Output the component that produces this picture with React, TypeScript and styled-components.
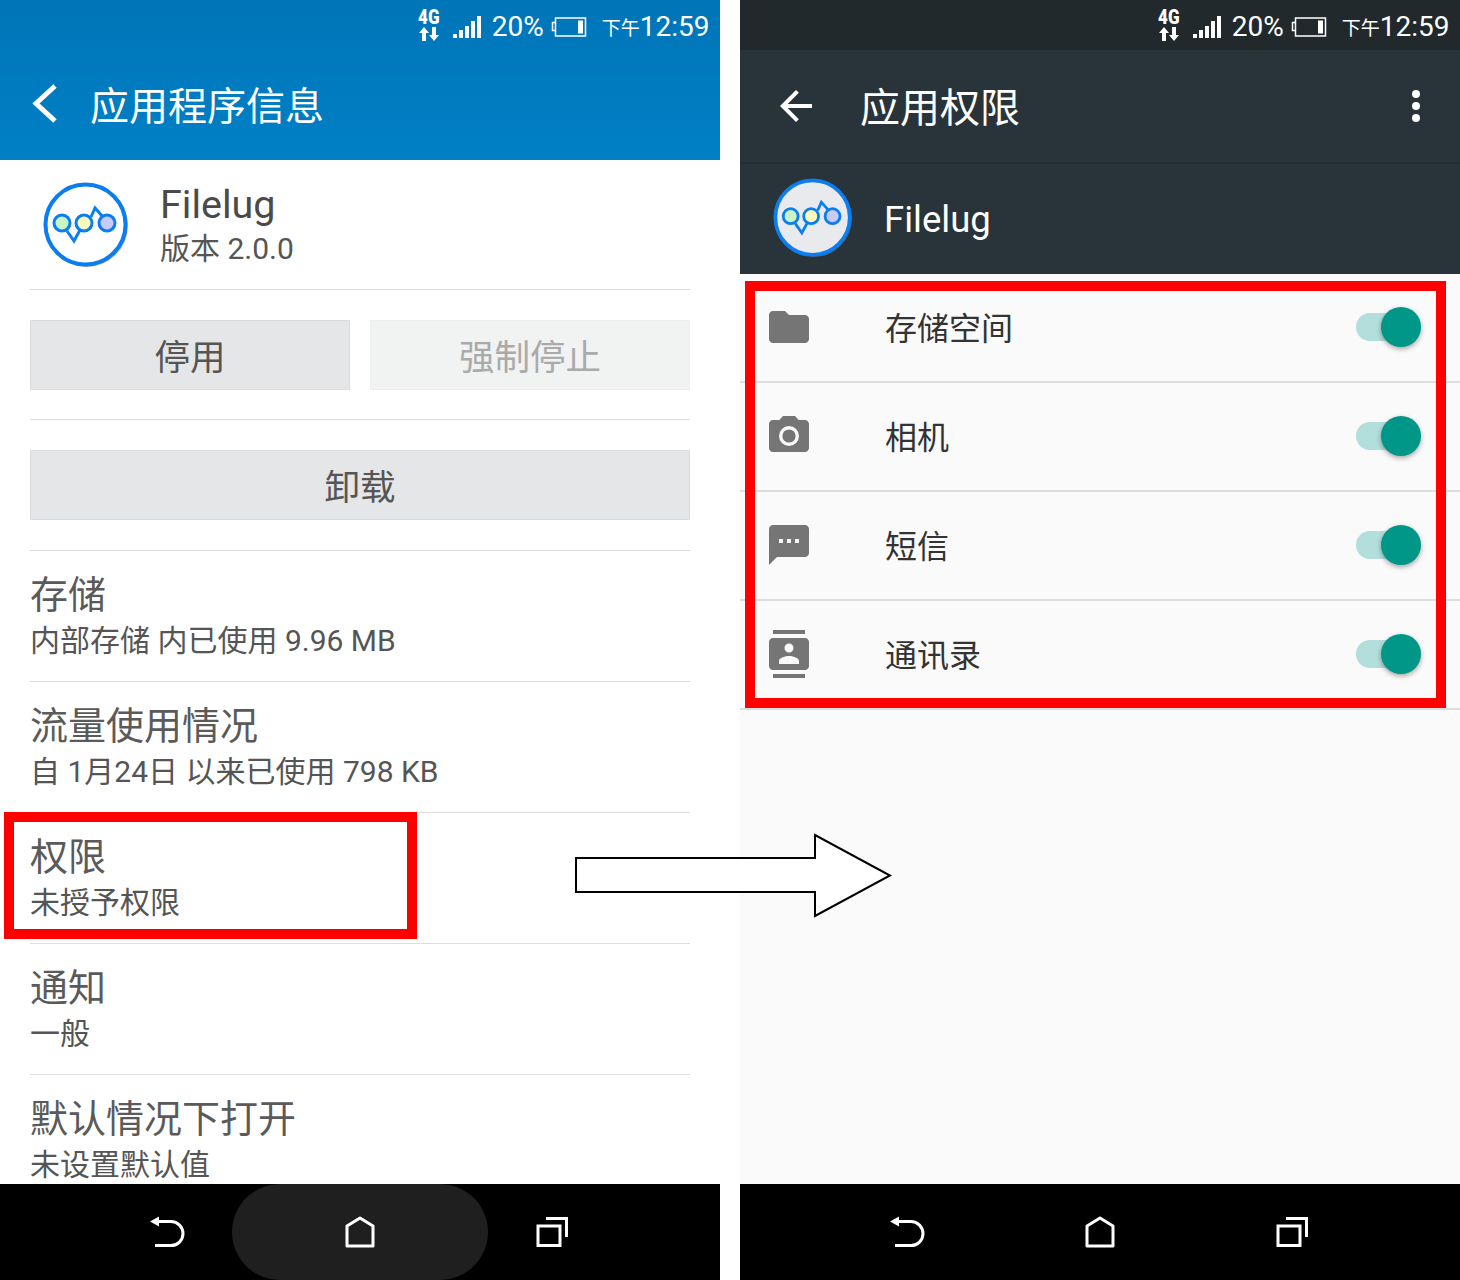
import styled, { createGlobalStyle } from "styled-components";

const GlobalStyle = createGlobalStyle`
  html, body {
    margin: 0;
    background: #fff;
  }
  * {
    box-sizing: border-box;
  }
  body {
    font-family: Roboto, "Noto Sans CJK SC", sans-serif;
  }
`;

const LEFT_ITEMS = [
  { title: "存储", sub: "内部存储 内已使用 9.96 MB" },
  { title: "流量使用情况", sub: "自 1月24日 以来已使用 798 KB" },
  { title: "权限", sub: "未授予权限" },
  { title: "通知", sub: "一般" },
  { title: "默认情况下打开", sub: "未设置默认值" },
];

const PERMISSIONS = [
  { name: "存储空间", icon: "folder" },
  { name: "相机", icon: "camera" },
  { name: "短信", icon: "message" },
  { name: "通讯录", icon: "contacts" },
];

function Logo({ size, face }: { size: number; face: string }) {
  return (
    <svg width={size} height={size} viewBox="0 0 86 86">
      <circle cx="43.500" cy="43.500" r="41.500" fill="#777" opacity="0.55" />
      <circle cx="42.500" cy="42.500" r="40" fill={face} stroke="#0a7df2" strokeWidth="4" />
      <path
        d="M24 49l7 10 6-11M48 35l4-9 8 9"
        fill="none"
        stroke="#0a7df2"
        strokeWidth="3"
      />
      <circle cx="19" cy="41" r="8" fill="#c8f5c4" stroke="#0a7df2" strokeWidth="3" />
      <circle cx="41" cy="41" r="8" fill="#fbfabb" stroke="#0a7df2" strokeWidth="3" />
      <circle cx="64" cy="41" r="8" fill="#c9c9fb" stroke="#0a7df2" strokeWidth="3" />
    </svg>
  );
}

function PermissionIcon({ name }: { name: string }) {
  if (name === "folder") {
    return (
      <svg width="48" height="48" viewBox="0 0 24 24" fill="#757575">
        <path d="M10 4H4c-1.100 0-2 .9-2 2v12c0 1.100.9 2 2 2h16c1.100 0 2-.9 2-2V8c0-1.100-.9-2-2-2h-8l-2-2z" />
      </svg>
    );
  }
  if (name === "camera") {
    return (
      <svg width="48" height="48" viewBox="0 0 24 24" fill="#757575">
        <path d="M9 2L7.170 4H4c-1.100 0-2 .9-2 2v12c0 1.100.9 2 2 2h16c1.100 0 2-.9 2-2V6c0-1.100-.9-2-2-2h-3.170L15 2H9z" />
        <circle cx="12" cy="12" r="5" fill="#fafafa" />
        <circle cx="12" cy="12" r="3.300" />
      </svg>
    );
  }
  if (name === "message") {
    return (
      <svg width="48" height="48" viewBox="0 0 24 24" fill="#757575">
        <path
          fillRule="evenodd"
          d="M20 2H4c-1.100 0-1.990.9-1.990 2L2 22l4-4h14c1.100 0 2-.9 2-2V4c0-1.100-.9-2-2-2zM9 11H7V9h2v2zm4 0h-2V9h2v2zm4 0h-2V9h2v2z"
        />
      </svg>
    );
  }
  return (
    <svg width="48" height="48" viewBox="0 0 24 24" fill="#757575">
      <path
        fillRule="evenodd"
        d="M20 0H4v2h16V0zM4 24h16v-2H4v2zM20 4H4c-1.100 0-2 .9-2 2v12c0 1.100.9 2 2 2h16c1.100 0 2-.9 2-2V6c0-1.100-.9-2-2-2zm-8 2.750c1.240 0 2.250 1.010 2.250 2.250s-1.010 2.250-2.250 2.250S9.750 10.240 9.750 9 10.760 6.750 12 6.750zM17 17H7v-1.500c0-1.670 3.330-2.500 5-2.500s5 .83 5 2.500V17z"
      />
    </svg>
  );
}

function StatusBar() {
  return (
    <>
      <NetworkBadge>
        <NetworkLabel>4G</NetworkLabel>
        <svg width="20" height="14" viewBox="0 0 20 14" fill="#fff">
          <path d="M5 0l5 6H7v8H3V6H0zM15 14l-5-6h3V0h4v8h3z" />
        </svg>
      </NetworkBadge>
      <SignalIcon width="28" height="22" viewBox="0 0 28 22" fill="#fff">
        <rect x="0" y="18" width="4" height="4" />
        <rect x="6" y="14" width="4" height="8" />
        <rect x="12" y="10" width="4" height="12" />
        <rect x="18" y="5" width="4" height="17" />
        <rect x="24" y="0" width="4" height="22" />
      </SignalIcon>
      <StatusText>20%</StatusText>
      <BatteryIcon width="36" height="20" viewBox="0 0 36 20">
        <path d="M4.500 5.500h-3v8h3M4.500 1h30v18h-30z" fill="none" stroke="#fff" strokeWidth="1.500" />
        <rect x="27" y="3.500" width="5" height="13" fill="#fff" />
      </BatteryIcon>
      <ClockPrefix>下午</ClockPrefix>
      <StatusText>12:59</StatusText>
    </>
  );
}

function NavButtons({ highlightHome }: { highlightHome?: boolean }) {
  return (
    <NavBar>
      <NavSlot $side="left">
        <svg width="36" height="34" viewBox="0 0 36 34" fill="none" stroke="#fff" strokeWidth="3">
          <path d="M1 6.600L10 1.600V11.600Z" fill="#fff" strokeWidth="0" />
          <path d="M10 6.600H22a12 12 0 0 1 0 24H6" />
        </svg>
      </NavSlot>
      <HomeSlot $active={highlightHome}>
        <svg width="30" height="32" viewBox="0 0 30 32" fill="none" stroke="#fff" strokeWidth="3" strokeLinejoin="round">
          <path d="M15 2L28 10V30H2V10Z" />
        </svg>
      </HomeSlot>
      <NavSlot $side="right">
        <svg width="32" height="30" viewBox="0 0 32 30" fill="none" stroke="#fff" strokeWidth="3">
          <path d="M2 9H24V28.500H2Z" />
          <path d="M10 1.500H30.500V20" />
        </svg>
      </NavSlot>
    </NavBar>
  );
}

export default function App() {
  return (
    <>
      <GlobalStyle />
      <Page>
        <Screen>
          <BlueHeader>
            <StatusRow>
              <StatusBar />
            </StatusRow>
            <BlueToolbar>
              <svg width="28" height="40" viewBox="0 0 28 40" fill="none" stroke="#fff" strokeWidth="5">
                <path d="M24 3L5 20.500L24 38" />
              </svg>
              <BlueTitle>应用程序信息</BlueTitle>
            </BlueToolbar>
          </BlueHeader>
          <InfoScroll>
            <AppRow>
              <Logo size={86} face="#fff" />
              <AppText>
                <AppName>Filelug</AppName>
                <AppVersion>版本 2.0.0</AppVersion>
              </AppText>
            </AppRow>
            <ButtonRow>
              <ActionButton>停用</ActionButton>
              <ActionButton $disabled>强制停止</ActionButton>
            </ButtonRow>
            <ButtonRow $tall>
              <ActionButton>卸载</ActionButton>
            </ButtonRow>
            {LEFT_ITEMS.map((item) => (
              <InfoItem key={item.title}>
                <InfoTitle>{item.title}</InfoTitle>
                <InfoSub>{item.sub}</InfoSub>
              </InfoItem>
            ))}
          </InfoScroll>
          <NavButtons highlightHome />
        </Screen>

        <Screen>
          <DarkStatus>
            <StatusBar />
          </DarkStatus>
          <DarkToolbar>
            <svg width="48" height="48" viewBox="0 0 24 24" fill="#fff">
              <path d="M20 11H7.830l5.590-5.590L12 4l-8 8 8 8 1.410-1.410L7.830 13H20v-2z" />
            </svg>
            <DarkTitle>应用权限</DarkTitle>
            <MoreDots>
              <Dot />
              <Dot />
              <Dot />
            </MoreDots>
          </DarkToolbar>
          <DarkAppRow>
            <Logo size={80} face="#e8eaed" />
            <DarkAppName>Filelug</DarkAppName>
          </DarkAppRow>
          <PermissionList>
            {PERMISSIONS.map((p) => (
              <PermissionRow key={p.name}>
                <PermissionIcon name={p.icon} />
                <PermissionName>{p.name}</PermissionName>
                <Toggle>
                  <ToggleTrack />
                  <ToggleThumb />
                </Toggle>
              </PermissionRow>
            ))}
          </PermissionList>
          <NavButtons />
        </Screen>

        <PermissionHighlight />
        <ListHighlight />
        <FlowArrow width="320" height="90" viewBox="0 0 320 90">
          <path
            d="M2 25H241V2L316 42.500L241 83V59H2Z"
            fill="#fff"
            stroke="#000"
            strokeWidth="2"
          />
        </FlowArrow>
      </Page>
    </>
  );
}

const Page = styled.div`
  position: relative;
  display: flex;
  gap: 20px;
  width: 1460px;
  height: 1280px;
  overflow: hidden;
  background: #fff;
`;

const Screen = styled.section`
  display: flex;
  flex-direction: column;
  width: 720px;
  height: 1280px;
  background: #fafafa;
`;

const StatusRow = styled.div`
  display: flex;
  align-items: center;
  justify-content: flex-end;
  height: 50px;
  padding: 4px 10.500px 0 0;
  color: #fff;
`;

const NetworkBadge = styled.div`
  display: flex;
  flex-direction: column;
  align-items: center;
  gap: 3px;
  width: 20px;
  margin: -3px 14px 0 0;
`;

const NetworkLabel = styled.span`
  font-size: 17px;
  font-weight: 900;
  line-height: 13px;
  color: #fff;
  transform: scaleY(1.2);
`;

const SignalIcon = styled.svg`
  margin-right: 11px;
`;

const StatusText = styled.span`
  font-size: 28px;
  line-height: 32px;
  color: #fff;
`;

const BatteryIcon = styled.svg`
  margin: 0 15px 0 7px;
`;

const ClockPrefix = styled.span`
  font-size: 19px;
  line-height: 32px;
  padding-top: 4px;
  color: #fff;
`;

const BlueHeader = styled.header`
  height: 160px;
  background: linear-gradient(#0075b8, #0080c6);
`;

const BlueToolbar = styled.div`
  display: flex;
  align-items: center;
  gap: 31px;
  height: 110px;
  padding: 0 0 4px 31px;
`;

const BlueTitle = styled.h1`
  margin: 0;
  font-size: 39px;
  font-weight: 400;
  color: #fff;
`;

const InfoScroll = styled.div`
  flex: 1;
  min-height: 0;
  overflow: hidden;
  padding: 0 30px;
  background: #fff;
`;

const AppRow = styled.div`
  display: flex;
  align-items: center;
  gap: 31px;
  height: 130px;
  padding-left: 13px;
  border-bottom: 1px solid #ddd;
`;

const AppText = styled.div`
  display: flex;
  flex-direction: column;
  padding-top: 2px;
`;

const AppName = styled.span`
  font-size: 39.500px;
  line-height: 46px;
  color: #4a4a4a;
`;

const AppVersion = styled.span`
  margin-top: 1px;
  font-size: 30px;
  line-height: 40px;
  color: #555;
`;

const ButtonRow = styled.div<{ $tall?: boolean }>`
  display: flex;
  gap: 20px;
  height: ${(p) => (p.$tall ? "131px" : "130px")};
  padding-top: 30px;
  border-bottom: 1px solid #ddd;
`;

const ActionButton = styled.div<{ $disabled?: boolean }>`
  flex: 1;
  display: flex;
  align-items: center;
  justify-content: center;
  height: 70px;
  padding-bottom: 1px;
  font-size: 35.500px;
  border: 1px solid ${(p) => (p.$disabled ? "#eeeeee" : "#dcdcdc")};
  background: ${(p) => (p.$disabled ? "#f1f2f2" : "#e5e6e7")};
  color: ${(p) => (p.$disabled ? "#aaa" : "#555")};
`;

const InfoItem = styled.div`
  height: 131px;
  padding-top: 21px;
  border-bottom: 1px solid #ddd;
`;

const InfoTitle = styled.div`
  font-size: 38px;
  line-height: 46px;
  color: #5a5a5a;
`;

const InfoSub = styled.div`
  margin-top: 5px;
  font-size: 30px;
  line-height: 36px;
  color: #555;
`;

const NavBar = styled.nav`
  display: grid;
  grid-template-columns: 232px 256px 232px;
  height: 96px;
  background: #000;
`;

const NavSlot = styled.div<{ $side: "left" | "right" }>`
  display: flex;
  align-items: center;
  justify-content: ${(p) => (p.$side === "left" ? "flex-end" : "flex-start")};
  padding: ${(p) => (p.$side === "left" ? "0 47px 0 0" : "0 0 0 48px")};
`;

const HomeSlot = styled.div<{ $active?: boolean }>`
  display: flex;
  align-items: center;
  justify-content: center;
  border-radius: 48px;
  background: ${(p) => (p.$active ? "#1f1f1f" : "transparent")};
`;

const DarkStatus = styled(StatusRow)`
  background: #21292d;
`;

const DarkToolbar = styled.div`
  display: flex;
  align-items: center;
  height: 114px;
  padding: 0 20px 0 32px;
  background: #29343a;
  border-bottom: 2px solid #252e33;
`;

const DarkTitle = styled.h1`
  flex: 1;
  margin: 0 0 2px 40px;
  font-size: 40px;
  font-weight: 400;
  color: #fff;
`;

const MoreDots = styled.div`
  display: flex;
  flex-direction: column;
  align-items: center;
  gap: 4px;
  width: 48px;
`;

const Dot = styled.span`
  width: 8px;
  height: 8px;
  border-radius: 50%;
  background: #fff;
`;

const DarkAppRow = styled.div`
  display: flex;
  align-items: center;
  height: 110px;
  padding: 0 0 2px 33px;
  background: #29333a;
`;

const DarkAppName = styled.span`
  margin: 2px 0 0 31px;
  font-size: 36.500px;
  color: #fff;
`;

const PermissionList = styled.div`
  flex: 1;
  min-height: 0;
  background: #fafafa;
`;

const PermissionRow = styled.div`
  display: flex;
  align-items: center;
  height: 109px;
  padding: 0 39px 1px 25px;
  border-bottom: 2px solid #ddd;
`;

const PermissionName = styled.span`
  flex: 1;
  margin: 0 0 2px 72px;
  font-size: 32px;
  color: #333;
`;

const Toggle = styled.div`
  position: relative;
  display: flex;
  align-items: center;
  width: 65px;
  height: 40px;
`;

const ToggleTrack = styled.span`
  width: 56px;
  height: 28px;
  border-radius: 14px;
  background: #b2dfdb;
`;

const ToggleThumb = styled.span`
  position: absolute;
  top: 0;
  right: 0;
  width: 40px;
  height: 40px;
  border-radius: 50%;
  background: #009688;
  box-shadow: 0 2px 5px rgba(0, 0, 0, 0.35);
`;

const PermissionHighlight = styled.div`
  position: absolute;
  left: 4px;
  top: 812px;
  width: 413px;
  height: 127px;
  border: 10px solid #f00;
`;

const ListHighlight = styled.div`
  position: absolute;
  left: 745px;
  top: 281px;
  width: 701px;
  height: 427px;
  border: 10px solid #f00;
`;

const FlowArrow = styled.svg`
  position: absolute;
  left: 574px;
  top: 833px;
`;
